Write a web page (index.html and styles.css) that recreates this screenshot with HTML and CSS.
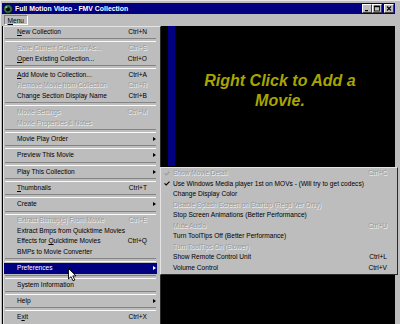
FILE: index.html
```html
<!DOCTYPE html>
<html>
<head>
<meta charset="utf-8">
<title>Full Motion Video - FMV Collection</title>
<link rel="stylesheet" href="styles.css">
</head>
<body>
<div class="window">
  <div class="titlebar">
    <svg class="app-icon" viewBox="0 0 10 10" width="10" height="10">
      <circle cx="5" cy="5" r="4.5" fill="#2f6f4a" stroke="#101010" stroke-width="0.9"/>
      <circle cx="5" cy="5.3" r="2.1" fill="#050505"/>
      <circle cx="3.3" cy="3.2" r="1.1" fill="#7cc48a"/>
    </svg>
    <span class="title">Full Motion Video - FMV Collection</span>
    <div class="caption-buttons">
      <span class="cbtn"><svg viewBox="0 0 8 7" width="8" height="7"><rect x="2" y="5" width="3" height="1.2" fill="#000"/></svg></span>
      <span class="cbtn"><svg viewBox="0 0 8 7" width="8" height="7"><rect x="1.5" y="1" width="5" height="5" fill="none" stroke="#000" stroke-width="0.8"/><rect x="1.5" y="1" width="5" height="1.2" fill="#000"/></svg></span>
      <span class="cbtn close"><svg viewBox="0 0 8 7" width="8" height="7"><path d="M2 1.5 L6 5.5 M6 1.5 L2 5.5" stroke="#000" stroke-width="1.1"/></svg></span>
    </div>
  </div>
  <div class="menubar"><span class="menubar-item"><u>M</u>enu</span></div>
  <div class="client">
    <div class="left-pane"></div>
    <div class="blue-bar"></div>
    <div class="stage"><p class="hint">Right Click to Add a<br>Movie.</p></div>
  </div>
</div>

<div class="menu dropdown">
  <div class="item"><span class="label"><u>N</u>ew Collection</span><span class="key">Ctrl+N</span><span class="sub"></span></div>
  <div class="sep"></div>
  <div class="item disabled"><span class="label">Save Current Collection As...</span><span class="key">Ctrl+S</span><span class="sub"></span></div>
  <div class="item"><span class="label"><u>O</u>pen Existing Collection...</span><span class="key">Ctrl+O</span><span class="sub"></span></div>
  <div class="sep"></div>
  <div class="item"><span class="label"><u>A</u>dd Movie to Collection...</span><span class="key">Ctrl+A</span><span class="sub"></span></div>
  <div class="item disabled"><span class="label">Remove Movie from Collection</span><span class="key">Ctrl+R</span><span class="sub"></span></div>
  <div class="item"><span class="label">Change Section Display Name</span><span class="key">Ctrl+B</span><span class="sub"></span></div>
  <div class="sep"></div>
  <div class="item disabled"><span class="label">Movie Settings</span><span class="key">Ctrl+M</span><span class="sub"></span></div>
  <div class="item disabled"><span class="label">Movie Properties &amp; Notes</span><span class="key"></span><span class="sub"></span></div>
  <div class="sep"></div>
  <div class="item"><span class="label">Movie Play Order</span><span class="key"></span><span class="sub"><i class="arrow"></i></span></div>
  <div class="sep"></div>
  <div class="item"><span class="label">Preview This Movie</span><span class="key"></span><span class="sub"><i class="arrow"></i></span></div>
  <div class="sep"></div>
  <div class="item"><span class="label">Play This Collection</span><span class="key"></span><span class="sub"><i class="arrow"></i></span></div>
  <div class="sep"></div>
  <div class="item"><span class="label"><u>T</u>humbnails</span><span class="key">Ctrl+T</span><span class="sub"></span></div>
  <div class="sep"></div>
  <div class="item"><span class="label">Create</span><span class="key"></span><span class="sub"><i class="arrow"></i></span></div>
  <div class="sep"></div>
  <div class="item disabled"><span class="label">Extract Bitmap(s) From Movie</span><span class="key">Ctrl+E</span><span class="sub"></span></div>
  <div class="item"><span class="label">Extract Bmps from Quicktime Movies</span><span class="key"></span><span class="sub"></span></div>
  <div class="item"><span class="label">Effects for <u>Q</u>uicktime Movies</span><span class="key">Ctrl+Q</span><span class="sub"></span></div>
  <div class="item"><span class="label">BMPs to Movie Converter</span><span class="key"></span><span class="sub"></span></div>
  <div class="sep"></div>
  <div class="item active"><span class="label">Preferences</span><span class="key"></span><span class="sub"><i class="arrow"></i></span></div>
  <div class="sep"></div>
  <div class="item"><span class="label">System Information</span><span class="key"></span><span class="sub"></span></div>
  <div class="sep"></div>
  <div class="item"><span class="label">Help</span><span class="key"></span><span class="sub"><i class="arrow"></i></span></div>
  <div class="sep"></div>
  <div class="item"><span class="label">E<u>x</u>it</span><span class="key">Ctrl+X</span><span class="sub"></span></div>
</div>

<div class="menu submenu">
  <div class="item disabled"><span class="mark"><svg class="check" viewBox="0 0 6 5" width="6" height="5"><path d="M0.5 2.4 L2.2 4 L5.5 0.6" fill="none" stroke="#9a9a9a" stroke-width="1.1"/></svg></span><span class="label">Show Movie Detail</span><span class="key">Ctrl+C</span></div>
  <div class="item"><span class="mark"><svg class="check" viewBox="0 0 6 5" width="6" height="5"><path d="M0.5 2.4 L2.2 4 L5.5 0.6" fill="none" stroke="#000" stroke-width="1.1"/></svg></span><span class="label">Use Windows Media player 1st on MOVs - (Will try to get codecs)</span><span class="key"></span></div>
  <div class="item"><span class="mark"></span><span class="label">Change Display Color</span><span class="key"></span></div>
  <div class="item disabled"><span class="mark"></span><span class="label">Disable Splash Screen on Startup (Regd Ver Only)</span><span class="key"></span></div>
  <div class="item"><span class="mark"></span><span class="label">Stop Screen Animations (Better Performance)</span><span class="key"></span></div>
  <div class="item disabled"><span class="mark"></span><span class="label">Mute Audio</span><span class="key">Ctrl+U</span></div>
  <div class="item"><span class="mark"></span><span class="label">Turn ToolTips Off (Better Performance)</span><span class="key"></span></div>
  <div class="item disabled"><span class="mark"></span><span class="label">Turn ToolTips On (Slower)</span><span class="key"></span></div>
  <div class="item"><span class="mark"></span><span class="label">Show Remote Control Unit</span><span class="key">Ctrl+L</span></div>
  <div class="item"><span class="mark"></span><span class="label">Volume Control</span><span class="key">Ctrl+V</span></div>
</div>

<svg class="cursor" viewBox="0 0 9 14" width="9" height="14">
  <path d="M0.5 0.5 L0.5 11 L3 8.6 L5 12.8 L6.8 12 L4.8 7.9 L8 7.9 Z" fill="#fff" stroke="#000" stroke-width="0.9" stroke-linejoin="miter"/>
</svg>
</body>
</html>
```

FILE: styles.css
```css
* {
  box-sizing: border-box;
  margin: 0;
  padding: 0;
}

html, body {
  width: 400px;
  height: 324px;
}

body {
  overflow: hidden;
  position: relative;
  background: #bdbdbd;
  font-family: "Liberation Sans", Arial, sans-serif;
  color: #000;
}

.window {
  height: 324px;
  display: flex;
  flex-direction: column;
  padding: 2px 5px 0 1px;
  border-top: 1px solid #e6e6e6;
  border-left: 1px solid #e6e6e6;
}

.titlebar {
  height: 11px;
  flex: none;
  display: flex;
  align-items: center;
  padding-left: 1px;
  background: #000080;
  color: #fff;
}

.app-icon {
  flex: none;
  display: block;
}

.title {
  margin-left: 2px;
  font-weight: bold;
  font-size: 6.9px;
  line-height: 11px;
  white-space: nowrap;
}

.caption-buttons {
  margin-left: auto;
  display: flex;
  padding-right: 1px;
}

.cbtn {
  width: 10px;
  height: 9px;
  display: flex;
  align-items: center;
  justify-content: center;
  background: #bdbdbd;
  border: 1px solid;
  border-color: #fff #404040 #404040 #fff;
}

.cbtn svg {
  display: block;
}

.cbtn.close {
  margin-left: 2px;
}

.menubar {
  height: 12px;
  flex: none;
  display: flex;
  align-items: center;
  padding-left: 2px;
}

.menubar-item {
  height: 10px;
  display: flex;
  align-items: center;
  padding: 0 2.5px;
  font-size: 6.6px;
  border: 1px solid;
  border-color: #808080 #fff #fff #808080;
}

.client {
  flex: 1;
  display: grid;
  grid-template-columns: 166px 7px 1fr;
  align-items: start;
  background: #000;
}

.blue-bar {
  height: 140px;
  background: #000080;
}

.stage {
  padding: 45px 10px 0 0;
  text-align: center;
}

.hint {
  font: italic bold 16px/20px "Liberation Sans", Arial, sans-serif;
  color: #a8a500;
}

/* menus */
.menu {
  position: absolute;
  background: #bdbdbd;
  border: 1px solid;
  border-color: #e4e4e4 #2a2a2a #2a2a2a #e4e4e4;
  font-size: 6.6px;
  color: #000;
}

.dropdown {
  left: 3px;
  top: 25.5px;
  width: 158px;
  padding: 0.25px 3px 2px 0;
}

.submenu {
  left: 160px;
  top: 166.5px;
  width: 238px;
  padding: 0.5px 10px 0.5px 0;
}

.item {
  height: 10.5px;
  line-height: 10.5px;
  display: grid;
  align-items: center;
  white-space: nowrap;
}

.dropdown .item {
  grid-template-columns: 1fr auto 10px;
  padding-left: 13px;
}

.submenu .item {
  grid-template-columns: 12px 1fr auto;
}

.key {
  text-align: right;
}

.sub {
  display: flex;
  align-items: center;
}

.arrow {
  display: block;
  width: 0;
  height: 0;
  margin-left: 6px;
  border-left: 3px solid #000;
  border-top: 2.5px solid transparent;
  border-bottom: 2.5px solid transparent;
}

.item.active {
  background: #000080;
  color: #fff;
}

.item.active .arrow {
  border-left-color: #fff;
}

.disabled {
  color: #979797;
  text-shadow: 0.7px 0.7px 0 #f6f6f6;
}

.mark {
  display: flex;
  align-items: center;
}

.check {
  display: block;
  margin-left: 3px;
}

.sep {
  height: 5.8px;
  display: flex;
  align-items: center;
  padding: 0 1px;
}

.sep::before {
  content: "";
  flex: 1;
  height: 2px;
  border-top: 1px solid #848484;
  border-bottom: 1px solid #fafafa;
}

.cursor {
  position: absolute;
  left: 68px;
  top: 268px;
}
```
